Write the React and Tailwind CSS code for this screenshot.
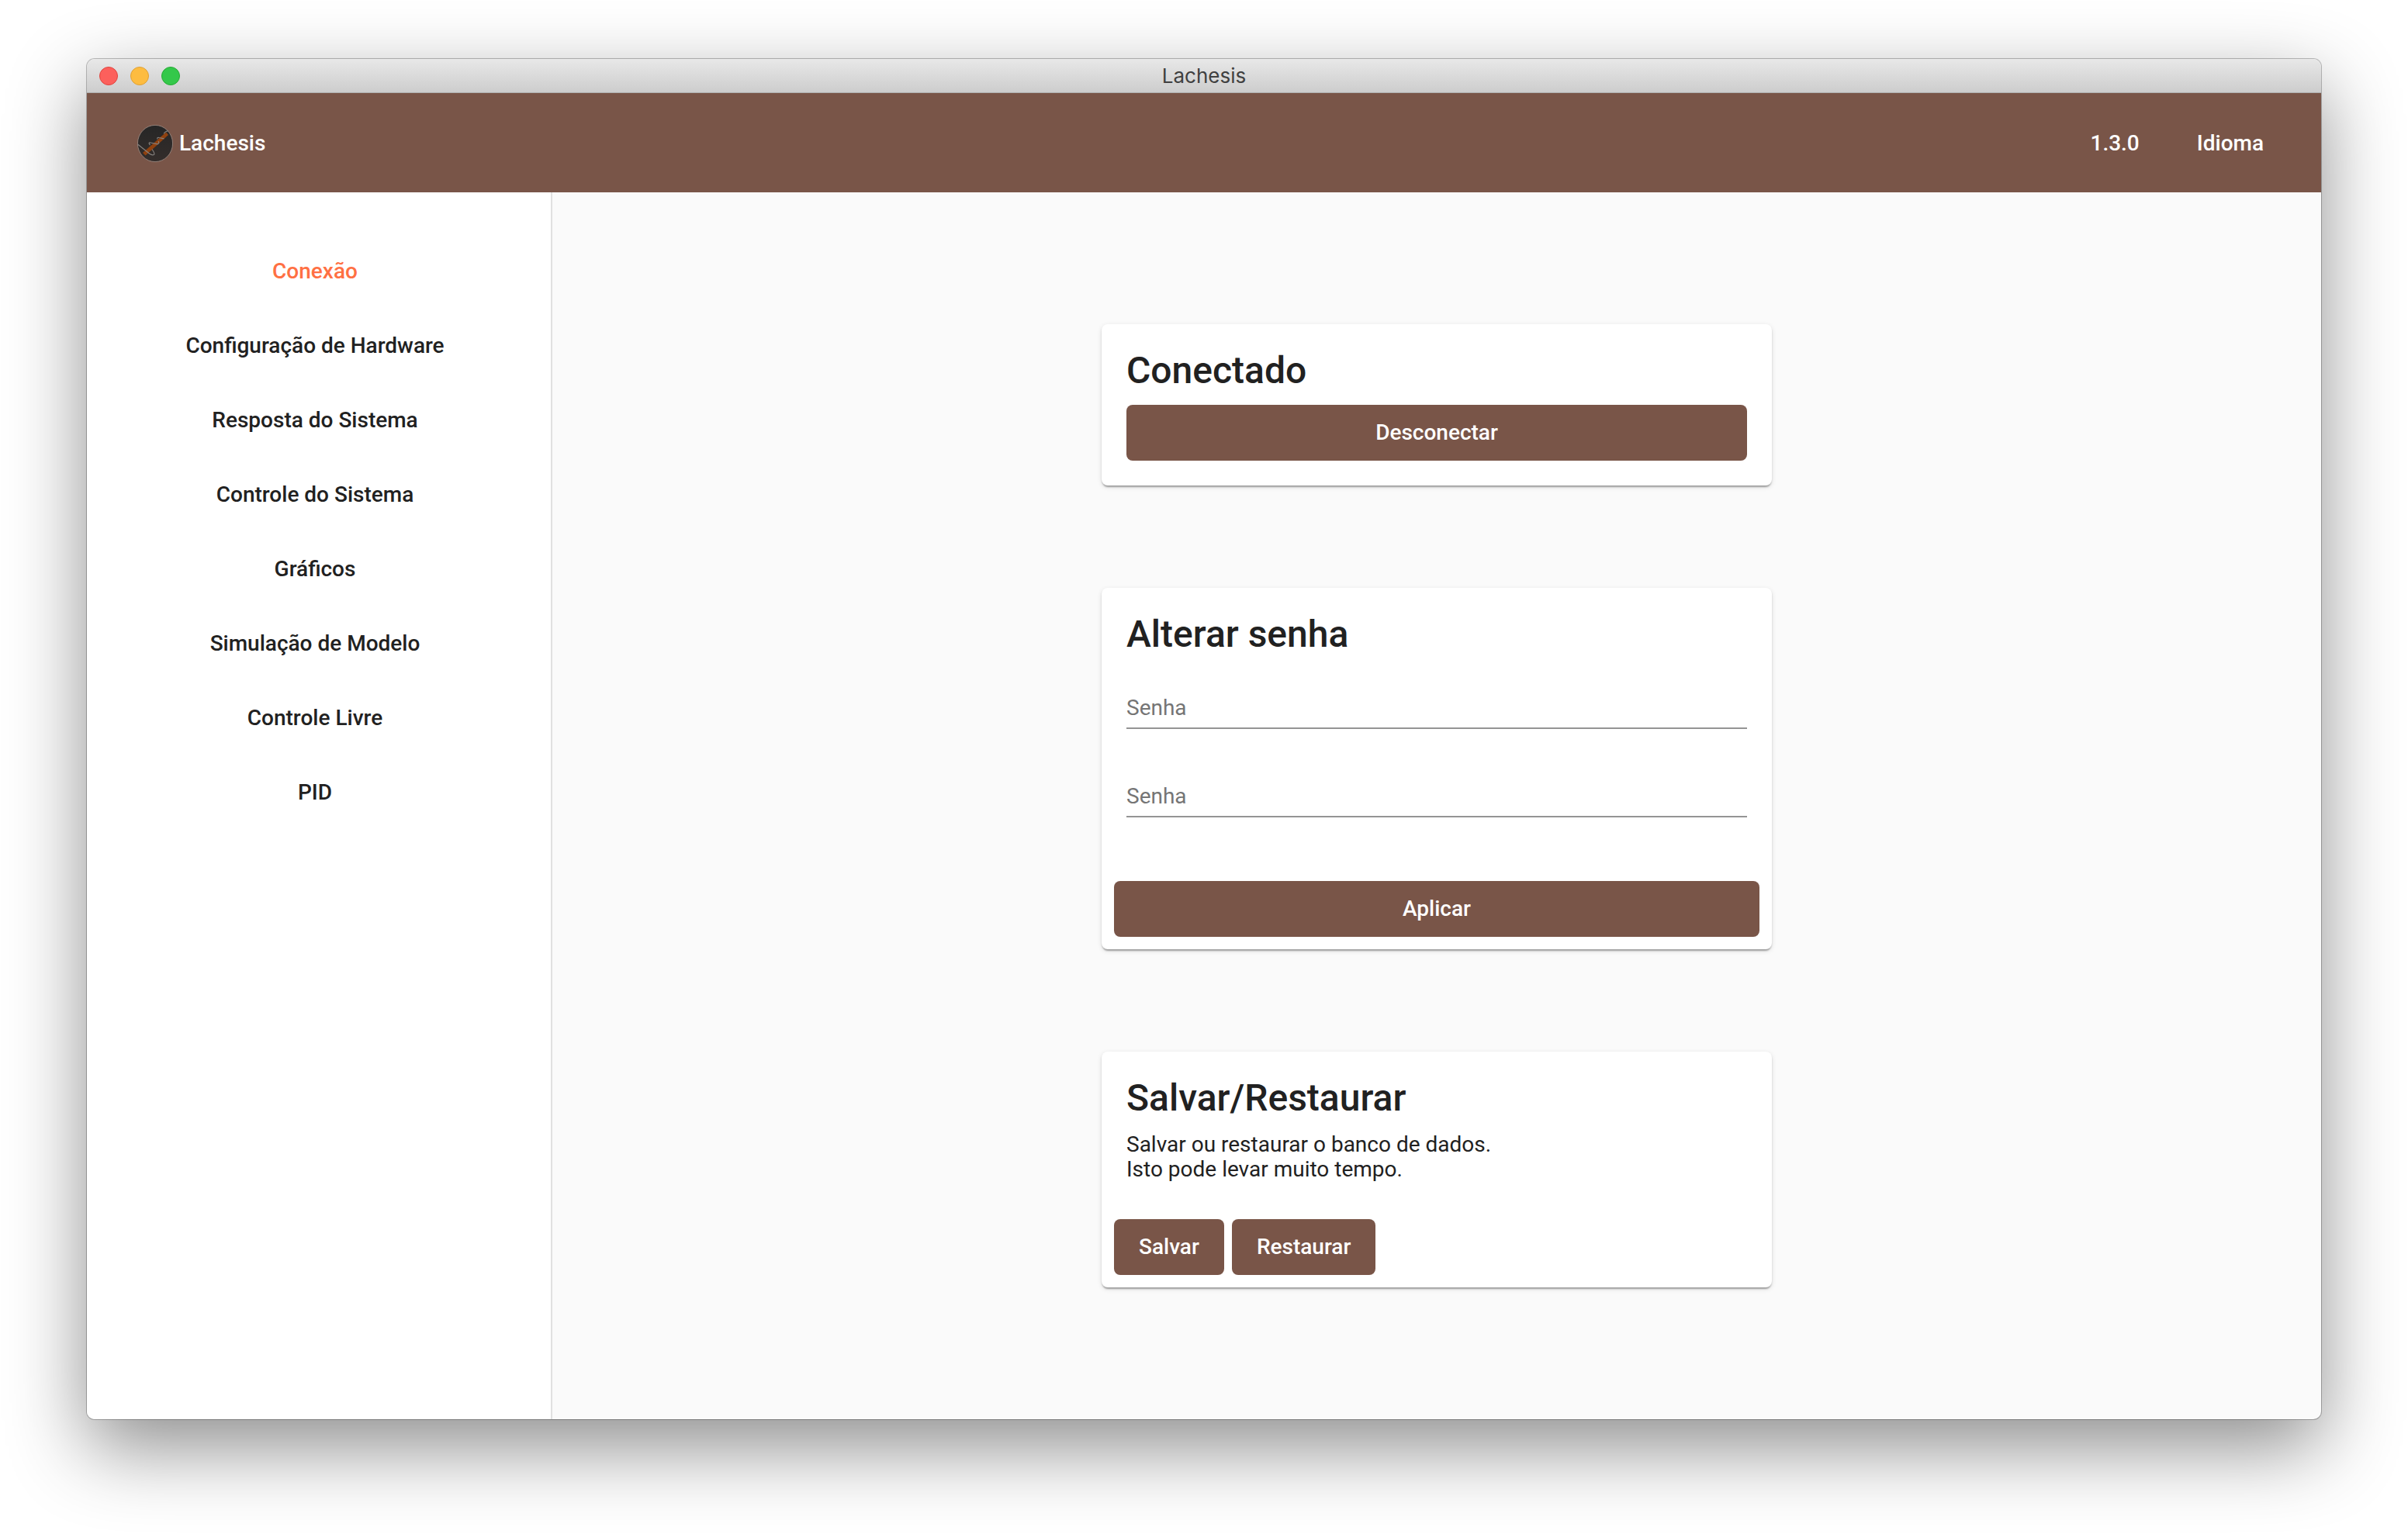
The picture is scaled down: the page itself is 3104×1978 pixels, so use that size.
const NAV = [
  'Conexão',
  'Configuração de Hardware',
  'Resposta do Sistema',
  'Controle do Sistema',
  'Gráficos',
  'Simulação de Modelo',
  'Controle Livre',
  'PID',
];

function Logo() {
  return (
    <svg viewBox="0 0 46 48" className="h-12 w-[46px]" aria-hidden="true">
      <defs>
        <linearGradient id="disc" x1="0" y1="0" x2="0" y2="1">
          <stop offset="0" stopColor="#262626" />
          <stop offset="1" stopColor="#342d2b" />
        </linearGradient>
      </defs>
      <ellipse cx="23" cy="24" rx="22.6" ry="23.6" fill="url(#disc)" stroke="#a08f88" strokeWidth="0.8" />
      <path d="M7 36 L37 9.500 L40 13 L10.500 39.500 Z" fill="#90410f" />
      <path
        d="M0.500 25 L15.500 37 Q19 39.500 21.500 38.500 Q23 37 19 31.500 M16.500 26 Q13.500 22.500 17 23 L26 24.800 Q29 24 27 21 M26 18.500 Q25 15.800 28 16.500 L34.500 17.800 M34.500 11.500 Q34 9.500 40 7.500"
        fill="none"
        stroke="#85807d"
        strokeWidth="1.2"
      />
    </svg>
  );
}

function Card({ title, children }) {
  return (
    <section className="w-[864px] rounded-lg bg-white shadow-[0_4px_2px_-2px_rgba(0,0,0,0.2),0_2px_2px_0_rgba(0,0,0,0.14),0_2px_6px_0_rgba(0,0,0,0.12)]">
      <h2 className="px-8 pt-8 text-5xl leading-14 font-medium">{title}</h2>
      {children}
    </section>
  );
}

function Button({ children, className = '' }) {
  return (
    <button type="button" className={`h-18 rounded-lg bg-[#795548] px-8 font-medium text-white ${className}`}>
      {children}
    </button>
  );
}

function PasswordField({ label }) {
  return (
    <input
      type="password"
      aria-label={label}
      placeholder={label}
      className="block h-[46px] w-full border-b-2 border-[#949494] bg-transparent pb-2 outline-none placeholder:text-[#757575]"
    />
  );
}

export default function App() {
  return (
    <div className="flex min-h-screen bg-white px-28 pt-19 pb-37 font-['Roboto',sans-serif] text-[28px] leading-8 text-[#212121]">
      <div className="flex grow flex-col overflow-hidden rounded-[10px] bg-[#fafafa] shadow-[0_0_0_1px_rgba(0,0,0,0.25),0_36px_100px_0_rgba(0,0,0,0.45)]">
        <div className="grid h-11 grid-cols-[1fr_auto_1fr] items-center border-b border-[#b0b0b0] bg-linear-to-b from-[#e8e8e8] to-[#cdcdcd] px-4 pt-px">
          <div className="flex gap-4">
            <button type="button" aria-label="Fechar" className="size-6 rounded-full border border-[#e0443e] bg-[#fc605c]" />
            <button type="button" aria-label="Minimizar" className="size-6 rounded-full border border-[#dea035] bg-[#fdbc40]" />
            <button type="button" aria-label="Maximizar" className="size-6 rounded-full border border-[#27aa35] bg-[#34c84a]" />
          </div>
          <span className="font-['Inter',sans-serif] text-[26px] text-[#404040]">Lachesis</span>
        </div>

        <header className="flex h-32 items-center justify-between bg-[#795548] pt-[2px] pr-[74px] pl-[65px] font-medium text-white">
          <a href="#inicio" className="flex items-center gap-2">
            <Logo />
            <span>Lachesis</span>
          </a>
          <div className="flex gap-[74px]">
            <span>1.3.0</span>
            <button type="button">Idioma</button>
          </div>
        </header>

        <div className="flex grow">
          <nav className="flex w-[600px] flex-col border-r-2 border-[#e0e0e0] bg-white pt-[54px] pr-[10px] text-center font-medium">
            {NAV.map((item, i) => (
              <a
                key={item}
                href={`#${i}`}
                className={`flex h-24 items-center justify-center ${i === 0 ? 'text-[#ff7043]' : ''}`}
              >
                {item}
              </a>
            ))}
          </nav>

          <main className="flex grow flex-col items-center justify-center gap-33">
            <Card title="Conectado">
              <div className="px-8 pt-4 pb-8">
                <Button className="block w-full">Desconectar</Button>
              </div>
            </Card>

            <Card title="Alterar senha">
              <div className="flex flex-col gap-[68px] px-8 pt-12">
                <PasswordField label="Senha" />
                <PasswordField label="Senha" />
              </div>
              <div className="px-4 pt-[82px] pb-4">
                <Button className="block w-full">Aplicar</Button>
              </div>
            </Card>

            <Card title="Salvar/Restaurar">
              <p className="px-8 pt-4">
                Salvar ou restaurar o banco de dados.
                <br />
                Isto pode levar muito tempo.
              </p>
              <div className="flex gap-[10px] px-4 pt-12 pb-4">
                <Button>Salvar</Button>
                <Button>Restaurar</Button>
              </div>
            </Card>
          </main>
        </div>
      </div>
    </div>
  );
}
